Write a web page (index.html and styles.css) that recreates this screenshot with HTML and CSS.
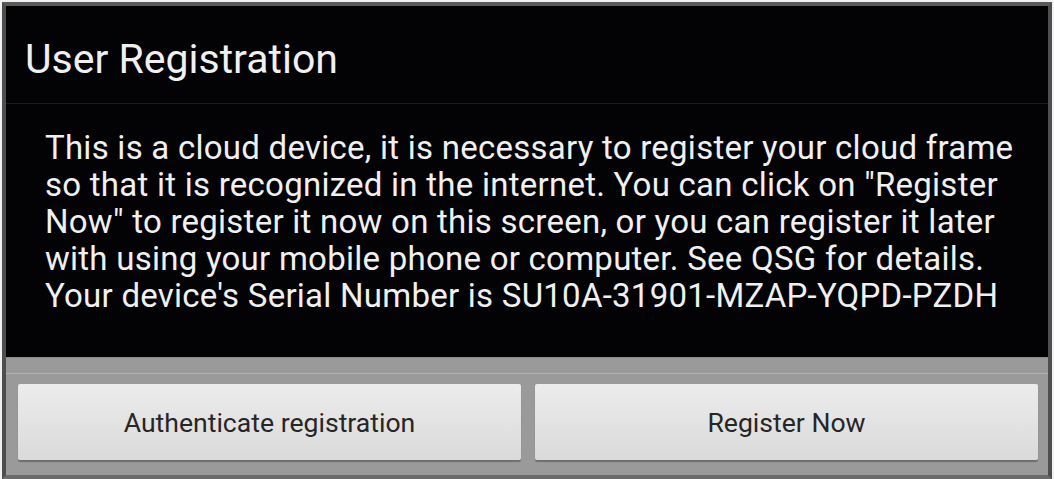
FILE: index.html
```html
<!DOCTYPE html>
<html lang="en">
<head>
    <meta charset="UTF-8">
    <meta name="viewport" content="width=device-width, initial-scale=1.0">
    <title>User Registration</title>
    <link rel="stylesheet" href="styles.css">
</head>
<body>
    <div class="dialog">
        <div class="title-bar">
            <h1>User Registration</h1>
        </div>
        <div class="message">
            <p>This is a cloud device, it is necessary to register your cloud frame so that it is recognized in the internet. You can click on "Register Now" to register it now on this screen, or you can register it later with using your mobile phone or computer. See QSG for details. Your device's Serial Number is SU10A-31901-MZAP-YQPD-PZDH</p>
        </div>
        <div class="button-bar">
            <button class="btn">Authenticate registration</button>
            <button class="btn">Register Now</button>
        </div>
    </div>
</body>
</html>
```

FILE: styles.css
```css
/* base */
body {
    margin: 0;
    background-color: #f2f2f2;
    font-family: Roboto, "Liberation Sans", sans-serif;
    height: 479px;
    overflow: hidden;
}

.dialog {
    margin: 2px 2px 0 2px;
    height: 477px;
    box-sizing: border-box;
    border: 4px solid #4e4e4e;
    border-top-color: #5a5a5a;
    border-bottom: 4px solid #6a6a6a;
    background-color: #030306;
    display: flex;
    flex-direction: column;
}

.title-bar {
    height: 98px;
    box-sizing: border-box;
    border-bottom: 1px solid #1c1c20;
    display: flex;
    align-items: center;
    padding: 8px 0 0 19px;
}

h1 {
    margin: 0;
    font-weight: normal;
    font-size: 41px;
    color: #f0f0f0;
}

.message {
    flex: 1;
    padding: 25px 18px 0 39px;
}

.message p {
    margin: 0;
    font-size: 33px;
    line-height: 37px;
    letter-spacing: 0.25px;
    color: #f0f0f0;
}

.button-bar {
    height: 118px;
    box-sizing: border-box;
    background-color: #9a9a9a;
    border-top: 1px solid #8a8a8a;
    display: flex;
    gap: 14px;
    padding: 26px 10px 15px 12px;
    position: relative;
}

.button-bar::before {
    content: "";
    position: absolute;
    left: 0;
    right: 0;
    top: 15px;
    height: 1px;
    background-color: #b2b2b2;
}

.btn {
    flex: 1;
    border: none;
    border-radius: 2px;
    background: linear-gradient(#ececec, #dadada);
    box-shadow: 0 2px 1px #6e6e6e;
    font-family: Roboto, "Liberation Sans", sans-serif;
    font-size: 26.6px;
    color: #262626;
    padding: 0;
}
```
